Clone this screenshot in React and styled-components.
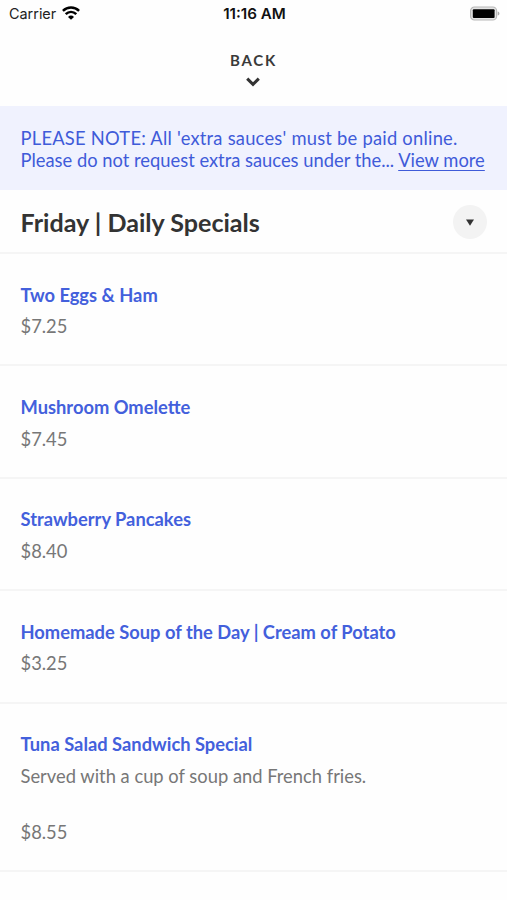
import React from 'react';
import styled, { createGlobalStyle } from 'styled-components';

const GlobalStyle = createGlobalStyle`
  * {
    box-sizing: border-box;
  }
  body {
    margin: 0;
    background: #fefefe;
    font-family: Lato, 'Liberation Sans', sans-serif;
    -webkit-font-smoothing: antialiased;
  }
`;

const Screen = styled.div`
  display: flex;
  flex-direction: column;
  min-height: 900px;
  overflow: hidden;
`;

const StatusBar = styled.div`
  display: grid;
  grid-template-columns: 1fr auto 1fr;
  align-items: center;
  height: 27px;
  padding: 0 7px 0 9px;
  font-family: Inter, 'Liberation Sans', sans-serif;
  color: #222;
`;

const Carrier = styled.div`
  display: flex;
  align-items: center;
  gap: 6px;
  font-size: 14.4px;

  svg {
    margin-bottom: 2px;
  }
`;

const Time = styled.div`
  font-size: 15.2px;
  font-weight: 600;
  color: #111;
`;

const Battery = styled.svg`
  justify-self: end;
  margin-bottom: 1px;
`;

const BackButton = styled.button`
  display: flex;
  flex-direction: column;
  align-items: center;
  height: 79px;
  padding: 24px 0 0;
  border: none;
  background: none;
  color: #3a3a3a;
  font-family: inherit;
  font-size: 15px;
  font-weight: 700;
  line-height: 18px;
  letter-spacing: 1.8px;

  svg {
    margin: 8px 1px 0 0;
  }
`;

const Notice = styled.div`
  height: 84px;
  padding: 21px 20.5px 0;
  background: #f0f2fe;
  color: #3f5bd9;
  font-size: 18.35px;
  line-height: 22px;
  white-space: nowrap;
`;

const NoticeLine = styled.div`
  letter-spacing: ${({ $spacing }) => $spacing || 'normal'};
`;

const ViewMore = styled.a`
  text-decoration: underline;
  text-decoration-thickness: 1.4px;
  text-underline-offset: 3px;
`;

const SectionHeader = styled.div`
  display: flex;
  align-items: center;
  justify-content: space-between;
  height: 64px;
  padding: 2px 20px 0 20.5px;
  border-bottom: 2px solid #f5f5f5;
`;

const SectionTitle = styled.h1`
  margin: 0;
  padding-bottom: 1px;
  color: #333;
  font-size: 25.1px;
  font-weight: 700;
  line-height: 30px;
`;

const Toggle = styled.button`
  display: flex;
  align-items: center;
  justify-content: center;
  width: 34px;
  height: 34px;
  padding: 0;
  border: none;
  border-radius: 50%;
  background: #f3f3f3;
`;

const MenuItem = styled.div`
  height: ${({ $tall }) => ($tall ? '168.6px' : '112.4px')};
  padding: 28.6px 20.5px 0;
  border-bottom: 2px solid #f5f5f5;
`;

const ItemName = styled.div`
  color: #4360dc;
  font-size: 18.32px;
  font-weight: 700;
  line-height: 24px;
`;

const ItemText = styled.div`
  margin-top: ${({ $gap }) => $gap || '7.6px'};
  color: #777;
  font-size: 18.35px;
  line-height: 24px;
`;

const items = [
  { name: 'Two Eggs & Ham', price: '$7.25' },
  { name: 'Mushroom Omelette', price: '$7.45' },
  { name: 'Strawberry Pancakes', price: '$8.40' },
  { name: 'Homemade Soup of the Day | Cream of Potato', price: '$3.25' },
  {
    name: 'Tuna Salad Sandwich Special',
    description: 'Served with a cup of soup and French fries.',
    price: '$8.55',
  },
];

const WifiIcon = () => (
  <svg width="18" height="14" viewBox="0 0 18 14" fill="none" stroke="#000" strokeWidth="2.5">
    <path d="M0.9 4.8C5.5 0.4 12.5 0.4 17.1 4.8" />
    <path d="M3.7 8.2C6.8 5.2 11.2 5.2 14.3 8.2" />
    <path d="M6 11C7.8 9.1 10.2 9.1 12 11L9 13.8Z" fill="#000" stroke="none" />
  </svg>
);

const BatteryIcon = () => (
  <Battery width="31" height="15" viewBox="0 0 31 15">
    <rect x="1.6" y="1" width="26" height="13" rx="3.8" fill="#e4e4e4" stroke="#b8b8b8" strokeWidth="1.2" />
    <rect x="3.8" y="3.2" width="21.8" height="8.8" rx="1" fill="#000" />
    <path d="M28.7 5.4C31 6.1 31 8.9 28.7 9.6Z" fill="#aaa" />
  </Battery>
);

const App = () => {
  return (
    <>
      <GlobalStyle />
      <Screen>
        <StatusBar>
          <Carrier>
            Carrier
            <WifiIcon />
          </Carrier>
          <Time>11:16 AM</Time>
          <BatteryIcon />
        </StatusBar>
        <BackButton>
          BACK
          <svg width="14" height="10" viewBox="0 0 14 10" fill="none" stroke="#333" strokeWidth="3">
            <path d="M1.2 1.6L7 7.3L12.8 1.6" />
          </svg>
        </BackButton>
        <Notice>
          <NoticeLine $spacing="0.23px">PLEASE NOTE: All 'extra sauces' must be paid online.</NoticeLine>
          <NoticeLine>
            Please do not request extra sauces under the... <ViewMore>View more</ViewMore>
          </NoticeLine>
        </Notice>
        <SectionHeader>
          <SectionTitle>Friday | Daily Specials</SectionTitle>
          <Toggle aria-label="Toggle section">
            <svg width="8" height="7" viewBox="0 0 8 7">
              <path d="M0 0.5H8L4 6.8Z" fill="#333" />
            </svg>
          </Toggle>
        </SectionHeader>
        {items.map((item) => (
          <MenuItem key={item.name} $tall={Boolean(item.description)}>
            <ItemName>{item.name}</ItemName>
            {item.description && <ItemText>{item.description}</ItemText>}
            <ItemText $gap={item.description && '32px'}>{item.price}</ItemText>
          </MenuItem>
        ))}
      </Screen>
    </>
  );
};

export default App;
